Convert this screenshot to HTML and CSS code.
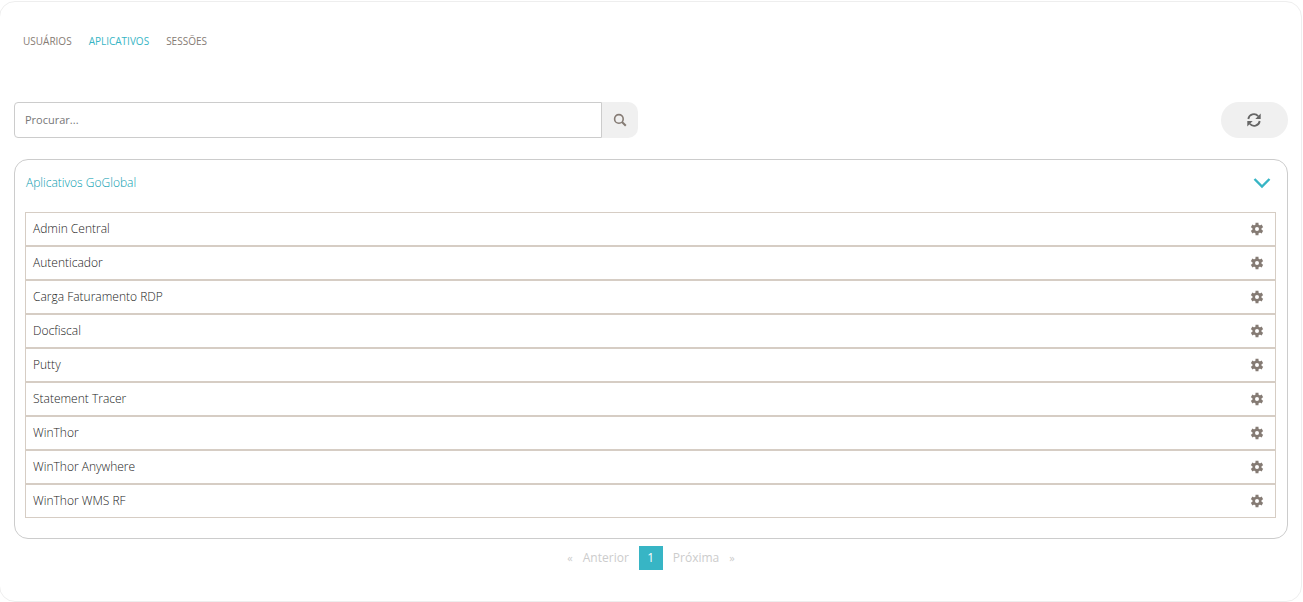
FILE: index.html
```html
<!DOCTYPE html>
<html lang="pt-BR">
<head>
  <meta charset="UTF-8" />
  <meta name="viewport" content="width=device-width, initial-scale=1" />
  <title>Aplicativos</title>
  <link rel="stylesheet" href="styles.css">
</head>
<body>

  <!-- Shared icons -->
  <svg class="icon-defs" aria-hidden="true">
    <symbol id="icon-cog" viewBox="0 0 14 14">
      <path d="M7 .8v3M7 10.200v3M1.600 3.900l2.600 1.500M9.800 8.600l2.600 1.500M1.600 10.100l2.600-1.500M9.800 5.400l2.600-1.500" fill="none" stroke="currentColor" stroke-width="3" />
      <circle cx="7" cy="7" r="3.300" fill="none" stroke="currentColor" stroke-width="2.600" />
    </symbol>
  </svg>

  <main class="page">
    <nav class="tabs">
      <a href="#usuarios">USUÁRIOS</a>
      <a href="#aplicativos" class="active">APLICATIVOS</a>
      <a href="#sessoes">SESSÕES</a>
    </nav>

    <div class="toolbar">
      <form class="search">
        <input type="text" placeholder="Procurar..." aria-label="Procurar" />
        <button type="button" aria-label="Buscar">
          <svg width="14" height="14" viewBox="0 0 14 14" fill="none" stroke="currentColor">
            <circle cx="5.900" cy="5.900" r="4.300" stroke-width="1.600" />
            <path d="M9 9l3.800 3.800" stroke-width="2" />
          </svg>
        </button>
      </form>
      <button type="button" class="refresh" aria-label="Atualizar">
        <svg width="14" height="14" viewBox="0 0 14 14">
          <path d="M1.300 6a5.600 5.600 0 0 1 9.900-2.700M12.700 8a5.600 5.600 0 0 1-9.900 2.700" fill="none" stroke="currentColor" stroke-width="1.800" />
          <path d="M13.700 .6v5.400H8.300zM.3 13.400V8h5.400z" fill="currentColor" />
        </svg>
      </button>
    </div>

    <section class="panel">
      <header class="panel-header">
        <h2>Aplicativos GoGlobal</h2>
        <button type="button" aria-label="Recolher">
          <svg width="18" height="12" viewBox="0 0 18 12" fill="none" stroke="currentColor" stroke-width="2.400">
            <path d="M1.500 2l7.500 7.500L16.500 2" />
          </svg>
        </button>
      </header>
      <ul class="apps">
        <li>Admin Central <button type="button" aria-label="Configurar Admin Central"><svg><use href="#icon-cog" /></svg></button></li>
        <li>Autenticador <button type="button" aria-label="Configurar Autenticador"><svg><use href="#icon-cog" /></svg></button></li>
        <li>Carga Faturamento RDP <button type="button" aria-label="Configurar Carga Faturamento RDP"><svg><use href="#icon-cog" /></svg></button></li>
        <li>Docfiscal <button type="button" aria-label="Configurar Docfiscal"><svg><use href="#icon-cog" /></svg></button></li>
        <li>Putty <button type="button" aria-label="Configurar Putty"><svg><use href="#icon-cog" /></svg></button></li>
        <li>Statement Tracer <button type="button" aria-label="Configurar Statement Tracer"><svg><use href="#icon-cog" /></svg></button></li>
        <li>WinThor <button type="button" aria-label="Configurar WinThor"><svg><use href="#icon-cog" /></svg></button></li>
        <li>WinThor Anywhere <button type="button" aria-label="Configurar WinThor Anywhere"><svg><use href="#icon-cog" /></svg></button></li>
        <li>WinThor WMS RF <button type="button" aria-label="Configurar WinThor WMS RF"><svg><use href="#icon-cog" /></svg></button></li>
      </ul>
    </section>

    <nav class="pagination" aria-label="Paginação">
      <a href="#anterior"><small>«</small>Anterior</a>
      <a href="#1" class="current">1</a>
      <a href="#proxima">Próxima<small>»</small></a>
    </nav>
  </main>

</body>
</html>
```

FILE: styles.css
```css
* {
  box-sizing: border-box;
}

body {
  margin: 0;
  background: #fff;
  color: #666;
  font-family: "Open Sans", sans-serif;
  font-size: 12px;
  line-height: 18px;
}

a {
  color: inherit;
  text-decoration: none;
}

button {
  display: flex;
  align-items: center;
  justify-content: center;
  padding: 0;
  border: none;
  background: none;
  color: inherit;
  cursor: pointer;
}

.icon-defs {
  position: absolute;
  width: 0;
  height: 0;
}

.page {
  margin: 1px 1px 0 -1px;
  padding: 30px 13px 31px 14px;
  border: 1px solid #eee;
  border-radius: 16px;
}

.tabs {
  display: flex;
  gap: 17px;
  padding: 0 9px;
  font-size: 10px;
  color: #857b74;
}

.tabs .active {
  color: #37b5c5;
}

.toolbar {
  display: flex;
  justify-content: space-between;
  margin-top: 52px;
}

.search {
  display: flex;
  width: 49%;
  height: 36px;
}

.search input {
  flex: 1;
  min-width: 0;
  padding: 0 10px 2px;
  border: 1px solid #ccc;
  border-radius: 4px 0 0 4px;
  font-family: inherit;
  font-size: 11px;
  color: #666;
}

.search input::placeholder {
  color: #777;
}

.search button {
  width: 36px;
  border-radius: 0 10px 10px 0;
  background: #f0f0f0;
  color: #857b74;
}

.refresh {
  width: 67px;
  height: 36px;
  padding-right: 2px;
  border-radius: 18px;
  background: #f0f0f0;
}

.panel {
  margin-top: 21px;
  padding: 10px 11px 20px 10px;
  border: 1px solid #ccc;
  border-radius: 14px;
}

.panel-header {
  display: flex;
  align-items: center;
  justify-content: space-between;
  height: 26px;
  padding: 0 5px 0 1px;
  color: #37b5c5;
}

.panel-header h2 {
  margin: 0;
  color: #0a9db0;
  font-size: 12px;
  font-weight: 300;
}

.apps {
  margin: 16px 0 0;
  padding: 0;
  list-style: none;
}

.apps li {
  display: flex;
  align-items: center;
  justify-content: space-between;
  height: 34px;
  padding: 0 11px 0 7px;
  border: 1px solid #d6cdc4;
  color: #222;
  font-weight: 300;
}

.apps button {
  color: #857b74;
}

.apps svg {
  width: 14px;
  height: 14px;
}

.pagination {
  display: flex;
  align-items: center;
  justify-content: center;
  gap: 10px;
  margin-top: 7px;
  color: #ccc;
}

.pagination a {
  display: flex;
  gap: 10px;
}

.pagination small {
  font-size: 11px;
}

.pagination .current {
  justify-content: center;
  width: 24px;
  padding: 3px 0;
  background: #37b5c5;
  color: #fff;
}
```
